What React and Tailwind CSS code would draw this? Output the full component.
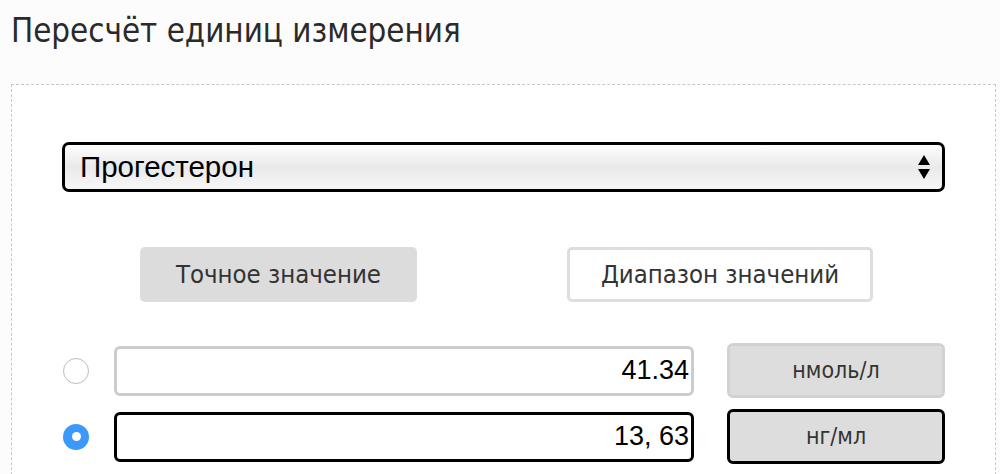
import { useState } from 'react';

const titleFont = { fontFamily: '"DejaVu Sans Condensed", "DejaVu Sans", Verdana, sans-serif' };
const inputFont = { fontFamily: '"Liberation Sans", Arial, Helvetica, sans-serif' };

const Radio = ({ checked, onClick }) => (
  <button
    onClick={onClick}
    className={`w-[26px] h-[26px] rounded-full shrink-0 flex items-center justify-center ${
      checked ? 'bg-[#3b99fc]' : 'bg-white border border-[#bdbdbd]'
    }`}
  >
    {checked && <span className="w-[9px] h-[9px] rounded-full bg-white"></span>}
  </button>
);

const App = () => {
  const [mode, setMode] = useState('exact');
  const [active, setActive] = useState(1);

  const rows = [
    { value: '41.34', unit: 'нмоль/л' },
    { value: '13, 63', unit: 'нг/мл' }
  ];

  return (
    <div className="min-h-screen bg-[#fcfcfc] text-[#222]">
      {/* Title */}
      <h1 className="pl-[11px] pt-[12px] text-[32.8px] leading-[39px] text-[#2a2a2a]" style={titleFont}>
        Пересчёт единиц измерения
      </h1>

      {/* Converter panel */}
      <div className="ml-[11px] mt-[33px] w-[985px] border border-dashed border-[#c8c8c8] bg-white pl-[50px] pr-[50px] pt-[57px] pb-[40px]">
        {/* Substance select */}
        <div
          className="h-[50px] w-[883px] rounded-[7px] border-[3px] border-black bg-gradient-to-b from-[#fdfdfd] via-[#e9e9e9] to-[#f7f7f7] flex items-center justify-between pl-[15px] pr-[12px]"
          style={inputFont}
        >
          <span className="text-[29.5px] text-black">Прогестерон</span>
          <svg width="12" height="24" viewBox="0 0 12 24">
            <path d="M6 0 L12 10 L0 10 Z" fill="#000" />
            <path d="M0 14 L12 14 L6 24 Z" fill="#000" />
          </svg>
        </div>

        {/* Mode buttons */}
        <div className="flex mt-[55px] ml-[78px] gap-[150px]" style={titleFont}>
          <button
            onClick={() => setMode('exact')}
            className={`w-[277px] h-[55px] rounded-[5px] text-[25.5px] text-[#333] ${
              mode === 'exact' ? 'bg-[#dcdcdc]' : 'bg-white border-[3px] border-[#dedede]'
            }`}
          >
            Точное значение
          </button>
          <button
            onClick={() => setMode('range')}
            className={`w-[306px] h-[55px] rounded-[5px] text-[25.5px] text-[#333] ${
              mode === 'range' ? 'bg-[#dcdcdc]' : 'bg-white border-[3px] border-[#dedede]'
            }`}
          >
            Диапазон значений
          </button>
        </div>

        {/* Value rows */}
        <div className="mt-[41px] flex flex-col gap-[11px]">
          {rows.map((row, i) => (
            <div key={row.unit} className="flex items-center">
              <div className="w-[52px] pl-[1px] flex">
                <Radio checked={active === i} onClick={() => setActive(i)} />
              </div>
              <div
                className={`w-[580px] h-[50px] rounded-[6px] border-[3px] bg-white flex items-center justify-end pr-[2px] text-[27px] text-black ${
                  active === i ? 'border-black' : 'border-[#cccccc]'
                }`}
                style={inputFont}
              >
                {row.value}
              </div>
              <button
                className={`ml-[33px] w-[218px] h-[55px] rounded-[6px] border-[3px] bg-[#dddddd] text-[23px] text-[#333] ${
                  active === i ? 'border-black' : 'border-[#d2d2d2]'
                }`}
                style={titleFont}
              >
                {row.unit}
              </button>
            </div>
          ))}
        </div>
      </div>
    </div>
  );
};

export default App;
